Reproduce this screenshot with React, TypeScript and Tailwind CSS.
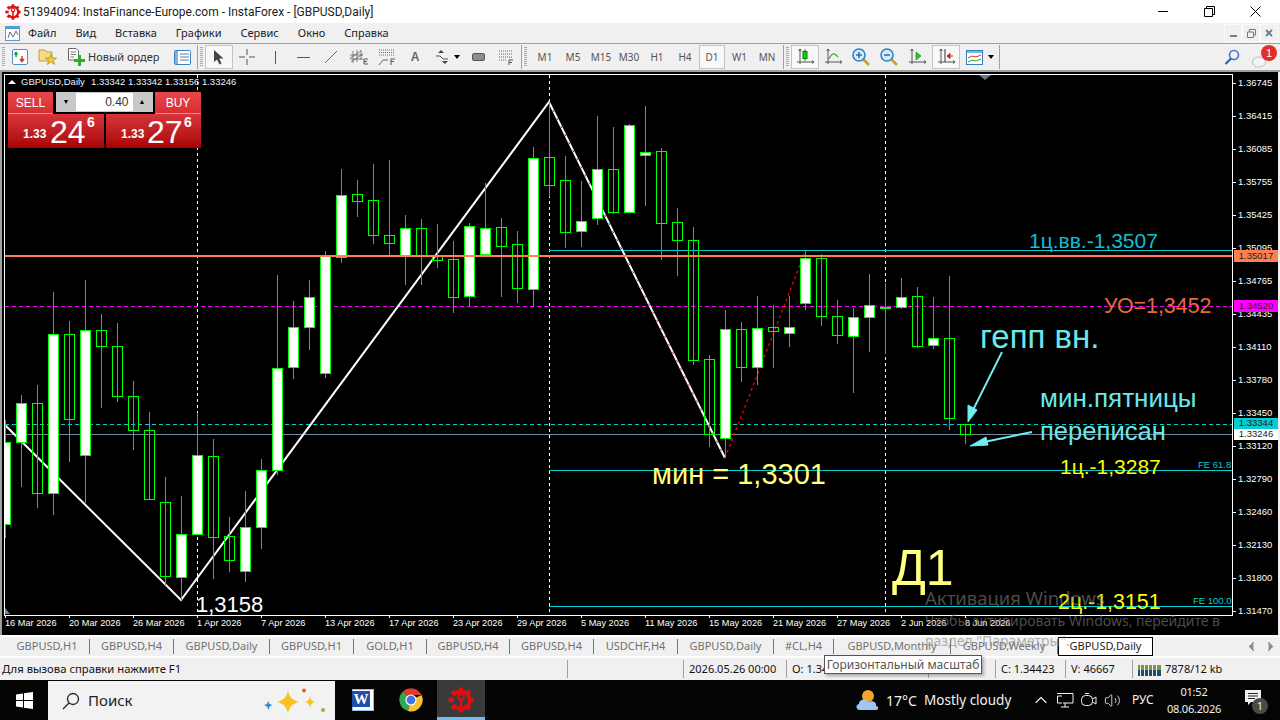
import { ChevronUp, ChevronLeft, ChevronRight, Volume2 } from "lucide-react";

// [wickTop, wickBottom, bodyTop, bodyBottom, filled]
const candles: [number, number, number, number, boolean][] = [
  [420, 538, 442, 524, true], [395, 487, 403, 442, true], [385, 508, 403, 493, false], [292, 515, 334, 493, true],
  [321, 462, 334, 419, false], [280, 503, 330, 455, true], [314, 408, 330, 346, false], [323, 402, 346, 396, false],
  [381, 450, 396, 430, false], [412, 499, 430, 499, false], [477, 585, 502, 576, false], [496, 600, 534, 577, true],
  [413, 534, 455, 534, true], [439, 579, 456, 537, false], [517, 572, 536, 560, false], [491, 582, 527, 571, true],
  [459, 549, 470, 527, true], [275, 475, 368, 470, true], [301, 379, 327, 367, true], [280, 350, 297, 327, true],
  [251, 378, 256, 373, true], [169, 263, 195, 257, true], [180, 217, 194, 201, false], [164, 244, 200, 235, false],
  [160, 256, 235, 243, false], [215, 285, 228, 255, true], [219, 285, 228, 255, false], [224, 268, 256, 260, false],
  [241, 313, 259, 297, false], [223, 306, 226, 296, true], [183, 255, 228, 254, true], [218, 297, 227, 246, false],
  [231, 303, 244, 288, false], [147, 307, 158, 289, true], [102, 197, 157, 185, false], [156, 248, 180, 232, false],
  [181, 247, 221, 231, true], [116, 225, 169, 218, true], [127, 214, 169, 212, false], [124, 213, 125, 212, true],
  [106, 206, 152, 155, true], [148, 260, 151, 223, false], [208, 276, 222, 240, false], [227, 365, 240, 360, false],
  [355, 447, 359, 434, false], [310, 458, 329, 438, true], [322, 382, 329, 367, false], [296, 385, 328, 367, true],
  [305, 368, 327, 331, false], [296, 347, 327, 333, true], [251, 310, 258, 303, true], [254, 326, 258, 316, false],
  [300, 344, 316, 335, false], [308, 393, 317, 336, true], [274, 352, 305, 317, true], [283, 354, 307, 308, true],
  [278, 309, 297, 307, true], [287, 348, 296, 346, false], [297, 349, 338, 345, true], [276, 430, 338, 418, false],
  [424, 444, 424, 434, false],
];

const prices: [string, number][] = [
  ["1.36745", 83], ["1.36415", 116], ["1.36085", 149], ["1.35755", 182], ["1.35425", 215], ["1.35095", 248],
  ["1.34765", 281], ["1.34435", 314], ["1.34110", 347], ["1.33780", 380], ["1.33450", 413], ["1.33120", 446],
  ["1.32790", 479], ["1.32460", 512], ["1.32130", 545], ["1.31800", 578], ["1.31470", 611],
];

const dates = [
  "16 Mar 2026", "20 Mar 2026", "26 Mar 2026", "1 Apr 2026", "7 Apr 2026", "13 Apr 2026", "17 Apr 2026", "23 Apr 2026",
  "29 Apr 2026", "5 May 2026", "11 May 2026", "15 May 2026", "21 May 2026", "27 May 2026", "2 Jun 2026", "8 Jun 2026",
];

const tabs = [
  { name: "GBPUSD,H1", w: "w-[85px]" },
  { name: "GBPUSD,H4", w: "w-[84px]" },
  { name: "GBPUSD,Daily", w: "w-[96px]" },
  { name: "GBPUSD,H1", w: "w-[84px]" },
  { name: "GOLD,H1", w: "w-[73px]" },
  { name: "GBPUSD,H4", w: "w-[83px]" },
  { name: "GBPUSD,H4", w: "w-[84px]" },
  { name: "USDCHF,H4", w: "w-[84px]" },
  { name: "GBPUSD,Daily", w: "w-[96px]" },
  { name: "#CL,H4", w: "w-[60px]" },
  { name: "GBPUSD,Monthly", w: "w-[117px]" },
  { name: "GBPUSD,Weekly", w: "w-[107px]" },
];

const notes = [
  { t: "1ц.вв.-1,3507", c: "left-[1029px] top-[168px] text-[21px] text-[#12bcd6]" },
  { t: "УО=1,3452", c: "left-[1104px] top-[235px] text-[21.4px] text-[#e8683f]" },
  { t: "гепп вн.", c: "left-[980px] top-[264px] text-[33px] text-[#6de6ea]" },
  { t: "мин.пятницы", c: "left-[1040px] top-[326px] text-[26px] text-[#6de6ea]" },
  { t: "переписан", c: "left-[1040px] top-[360px] text-[25.6px] text-[#6de6ea]" },
  { t: "1ц.-1,3287", c: "left-[1060px] top-[394px] text-[21px] text-[#ffff00]" },
  { t: "мин = 1,3301", c: "left-[652px] top-[402px] text-[29px] text-[#ffff80]" },
  { t: "1,3158", c: "left-[196px] top-[533px] text-[22px] text-white" },
  { t: "Д1", c: "left-[892px] top-[496px] text-[50px] text-[#ffff80]" },
  { t: "2ц.-1,3151", c: "left-[1058px] top-[531px] text-[21.4px] text-[#ffff00]" },
  { t: "FE 61.8", c: "left-[1198px] top-[393px] text-[9.5px] text-[#00ced1]" },
  { t: "FE 100.0", c: "left-[1193px] top-[529px] text-[9.5px] text-[#00ced1]" },
];

function Chart() {
  return (
    <svg className="absolute inset-0" width="1280" height="563" viewBox="0 72 1280 563">
      <defs>
        <clipPath id="plot">
          <rect x="5" y="75" width="1227" height="540" />
        </clipPath>
      </defs>
      <rect x="4.5" y="74.5" width="1228" height="540.5" fill="none" stroke="#fff" shapeRendering="crispEdges" />
      <g clipPath="url(#plot)">
        <g shapeRendering="crispEdges">
          <path d="M197.5 75V615M549.5 75V615M885.5 75V615" stroke="#fff" strokeDasharray="3 3" />
          <path d="M5 306.5H1232" stroke="#ff00ff" strokeDasharray="4 3" />
          <path d="M5 424.5H1232" stroke="#00ced1" strokeDasharray="4 3" />
          <path d="M5 434.5H1232" stroke="#778899" />
          <path d="M549 250.5H1232M549 470.5H1232M549 606.5H1232" stroke="#00ced1" />
        </g>
        <path d="M5 425L181 600L549 102L725 458" fill="none" stroke="#fff" strokeWidth="2" />
        <path d="M549 102L725 458" stroke="#e00000" strokeWidth="1" strokeDasharray="2 7" />
        <path d="M725 458L805 252" stroke="#ff0000" strokeWidth="1.2" strokeDasharray="3 3" />
        <g shapeRendering="crispEdges">
          {candles.map(([wt, wb, bt, bb, filled], i) => {
            const x = 5 + 16 * i;
            return (
              <g key={i}>
                <path d={`M${x + 0.5} ${wt}V${wb}`} stroke="#00e000" />
                <rect x={x - 4.5} y={bt + 0.5} width="10" height={bb - bt} fill={filled ? "#fff" : "#000"} fillOpacity={filled ? 1 : 0} stroke="#00ff00" />
              </g>
            );
          })}
          <rect x="5" y="255" width="1227" height="2" fill="#ff7f50" />
        </g>
      </g>
      {prices.map(([, y]) => (
        <path key={y} d={`M1233 ${y + 0.5}H1236`} stroke="#fff" shapeRendering="crispEdges" />
      ))}
      {dates.map((_, i) => (
        <path key={i} d={`M${5.5 + 64 * i} 615V618`} stroke="#fff" shapeRendering="crispEdges" />
      ))}
      <path d="M979 75H991L985 80Z" fill="#6b7b8c" />
      <path d="M5 614V608L10 614Z" fill="#778899" />
      <g fill="#6fedf0" stroke="#6fedf0">
        <path d="M1002 352L971 414" strokeWidth="2" />
        <path d="M968 422L968 405L977 410Z" />
        <path d="M1032 432L984 442" strokeWidth="2" />
        <path d="M970 446L986 437L988 445Z" />
      </g>
    </svg>
  );
}

function TradePanel() {
  return (
    <div className="absolute left-[8px] top-[20px] flex w-[193px] flex-col font-['Liberation_Sans',sans-serif] text-white">
      <div className="flex h-[22px] justify-between">
        <div className="flex w-[45px] items-center justify-center border-b border-[#f08a8a] bg-gradient-to-b from-[#e8474c] to-[#d82d33] text-[12px]">SELL</div>
        <div className="flex h-[20px] w-[97px] bg-[#c8c8c8] p-px text-[12px] text-[#333]">
          <div className="flex w-[19px] items-center justify-center text-[7px] text-black">▼</div>
          <div className="flex flex-1 items-center justify-end bg-white pr-1">0.40</div>
          <div className="flex w-[19px] items-center justify-center text-[7px] text-black">▲</div>
        </div>
        <div className="flex w-[46px] items-center justify-center border-b border-[#f08a8a] bg-gradient-to-b from-[#e8474c] to-[#d82d33] text-[12px]">BUY</div>
      </div>
      <div className="flex h-[34px] justify-between">
        <div className="relative w-[96px] bg-gradient-to-b from-[#d8343a] to-[#a80000]">
          <span className="absolute left-[15px] top-[14px] text-[12px] font-bold leading-none">1.33</span>
          <span className="absolute left-[42px] top-[2px] text-[32px] leading-none">24</span>
          <span className="absolute left-[79px] top-[1px] text-[14px] font-bold leading-none">6</span>
        </div>
        <div className="relative w-[95px] bg-gradient-to-b from-[#d8343a] to-[#a80000]">
          <span className="absolute left-[15px] top-[14px] text-[12px] font-bold leading-none">1.33</span>
          <span className="absolute left-[41px] top-[2px] text-[32px] leading-none">27</span>
          <span className="absolute left-[78px] top-[1px] text-[14px] font-bold leading-none">6</span>
        </div>
      </div>
    </div>
  );
}

function Logo({ size = 18 }: { size?: number }) {
  const teeth = [0, 45, 90, 135, 180, 225, 270, 315];
  return (
    <svg width={size} height={size} viewBox="0 0 24 24">
      <circle cx="12" cy="12" r="8" fill="none" stroke="#e01010" strokeWidth="3.5" strokeDasharray="36 14" strokeDashoffset="-32" />
      {teeth.map((a) => (
        <rect key={a} x="10" y="0.5" width="4" height="5" fill="#e01010" transform={`rotate(${a} 12 12)`} />
      ))}
      <circle cx="12" cy="9" r="2.6" fill="none" stroke="#e01010" strokeWidth="1.8" />
      <rect x="10.8" y="11" width="2.4" height="12" fill="#e01010" />
    </svg>
  );
}

function Axes({ children }: { children?: React.ReactNode }) {
  return (
    <svg width="20" height="20" viewBox="0 0 20 20" fill="none">
      <path d="M5 2V17M2 15H19M3.5 4L5 2L6.5 4M17 13.5L19 15L17 16.5" stroke="#555" />
      {children}
    </svg>
  );
}

function Lens({ minus }: { minus?: boolean }) {
  return (
    <svg width="20" height="20" viewBox="0 0 20 20" fill="none">
      <path d="M12 12L18 18" stroke="#d0a020" strokeWidth="2.6" />
      <circle cx="8" cy="8" r="6" fill="#d6ecfa" stroke="#2f83c8" strokeWidth="1.6" />
      <path d={minus ? "M5 8H11" : "M5 8H11M8 5V11"} stroke="#2f6fb0" strokeWidth="1.6" />
    </svg>
  );
}

function Caret() {
  return <span className="ml-px h-0 w-0 border-x-[3.5px] border-t-[4px] border-x-transparent border-t-black" />;
}

function Grip() {
  return <span className="mx-[2px] h-[20px] w-[3px] bg-[repeating-linear-gradient(#aaa_0_1px,#f0f0f0_1px_2px)]" />;
}

function Sep() {
  return <span className="block h-[24px] w-px bg-[#a0a0a0]" />;
}

function Btn({ active, children }: { active?: boolean; children?: React.ReactNode }) {
  return (
    <div className={`flex h-[24px] w-[28px] items-center justify-center ${active ? "border border-[#c4c4c4] bg-[#f8f8f8]" : ""}`}>
      {children}
    </div>
  );
}

function Toolbar() {
  return (
    <div className="flex h-[26px] items-center bg-[#f0f0f0] text-[12px] text-[#333]">
      <Grip />
      <div className="ml-[1px] flex w-[23px] justify-center">
        <svg width="16" height="16" viewBox="0 0 16 16" fill="none">
          <rect x="0.5" y="0.5" width="15" height="15" rx="1.5" fill="#fff" stroke="#4f8fc8" />
          <path d="M4 8V4M2.5 5.5L4 3.5L5.5 5.5" stroke="#10a030" strokeWidth="1.5" />
          <path d="M10 7V12M8 10L10 12.5L12 10" stroke="#e03020" strokeWidth="1.5" />
        </svg>
      </div>
      <div className="flex w-[32px] justify-center">
        <svg width="19" height="18" viewBox="0 0 19 18">
          <path d="M1 2H7L8.5 4H14V13H1Z" fill="#f4dc88" stroke="#bda048" />
          <path d="M13 6L14.6 10H18.5L15.4 12.4L16.6 16.5L13 14L9.4 16.5L10.6 12.4L7.5 10H11.4Z" fill="#f0c840" stroke="#b08a20" strokeWidth="0.7" />
        </svg>
      </div>
      <div className="flex w-[25px] justify-center">
        <svg width="18" height="18" viewBox="0 0 18 18">
          <path d="M1.5 0.5H9L11.5 3V12H1.5Z" fill="#fff" stroke="#666" />
          <path d="M3.5 4H9M3.5 6.5H9M3.5 9H7" stroke="#777" />
          <path d="M11 7V11H7V14H11V18H14V14H18V11H14V7Z" fill="#28b030" />
        </svg>
      </div>
      <span className="w-[76px] whitespace-nowrap font-['Noto_Sans',sans-serif] text-[11px]">Новый ордер</span>
      <div className="ml-[10px] flex w-[17px] justify-center">
        <svg width="17" height="15" viewBox="0 0 17 15" fill="none">
          <rect x="0.5" y="0.5" width="16" height="14" rx="1" fill="#fff" stroke="#3a7fc0" />
          <rect x="1" y="1" width="3" height="13" fill="#7fb4e0" />
          <path d="M6 4H15M6 7H15M6 10H15" stroke="#5a7ea0" />
        </svg>
      </div>
      <span className="ml-[6px]"><Sep /></span>
      <Grip />
      <Btn active>
        <svg width="12" height="16" viewBox="0 0 12 16"><path d="M1 1V13L4 10.5L6.5 15.5L8.5 14.5L6.2 9.5H10.5Z" fill="#444" /></svg>
      </Btn>
      <Btn>
        <svg width="16" height="16" viewBox="0 0 16 16" fill="none"><path d="M0 8H6M10 8H16M8 0V6M8 10V16" stroke="#555" /></svg>
      </Btn>
      <Btn><span className="h-[13px] w-px bg-[#555]" /></Btn>
      <Btn><span className="h-px w-[13px] bg-[#555]" /></Btn>
      <Btn>
        <svg width="14" height="14" viewBox="0 0 14 14" fill="none"><path d="M1 13L13 1" stroke="#666" /></svg>
      </Btn>
      <Btn>
        <svg width="20" height="18" viewBox="0 0 20 18" fill="none">
          <path d="M1 10L12 3M2 14L14 6M1 7H14M1 11H14M4 3V15M8 2V14M12 2V12" stroke="#666" strokeWidth="0.8" />
          <path d="M15 11H19M15 13.5H18M15 16H19M15 11V16" stroke="#555" />
        </svg>
      </Btn>
      <Btn>
        <svg width="18" height="18" viewBox="0 0 18 18" fill="none">
          <path d="M1 2H17M1 4.5H17M1 7H17" stroke="#666" strokeDasharray="1 1" />
          <path d="M1 17L5 12H10" stroke="#666" />
          <path d="M13 11H17M13 13.5H16M13 11V17" stroke="#555" />
        </svg>
      </Btn>
      <Btn><span className="font-['Liberation_Sans',sans-serif] text-[12px] font-bold text-[#666]">A</span></Btn>
      <Btn>
        <svg width="16" height="16" viewBox="0 0 16 16">
          <path d="M3 4L6 1L9 4Z" fill="#444" />
          <path d="M7 12L10 15L13 12Z" fill="#444" />
          <path d="M1 7L5 7L8 10L13 10" stroke="#555" fill="none" />
        </svg>
      </Btn>
      <span className="-ml-[6px] flex w-[10px] justify-center"><Caret /></span>
      <span className="ml-[3px] flex w-[28px] justify-center">
        <span className="h-[8px] w-[13px] rounded-[2px] border border-[#555] bg-[#8e8e8e]" />
      </span>
      <Btn>
        <svg width="14" height="15" viewBox="0 0 14 15" fill="none">
          <path d="M0 1H14M0 4H14M0 7H14M0 10H7" stroke="#666" strokeDasharray="1 1" />
          <path d="M10 10H14M10 12.5H13M10 10V15" stroke="#555" />
        </svg>
      </Btn>
      <span className="ml-[1px]"><Sep /></span>
      <Grip />
      <div className="ml-[2px] flex items-center text-[10px] text-[#555]">
        {["M1", "M5", "M15", "M30", "H1", "H4"].map((p) => (
          <span key={p} className="flex h-[24px] w-[28px] items-center justify-center">{p}</span>
        ))}
        <span className="flex h-[24px] w-[26px] items-center justify-center border border-[#c4c4c4] bg-[#f8f8f8]">D1</span>
        <span className="flex h-[24px] w-[29px] items-center justify-center">W1</span>
        <span className="flex h-[24px] w-[26px] items-center justify-center">MN</span>
      </div>
      <span className="ml-[3px]"><Sep /></span>
      <Grip />
      <Btn active>
        <Axes><path d="M10 2V14" stroke="#00a000" /><rect x="8" y="4.5" width="4" height="7" fill="#10d010" stroke="#008000" /></Axes>
      </Btn>
      <Btn>
        <Axes><path d="M6 12C9 5 12 6 15 10" stroke="#40a040" strokeWidth="1.2" /></Axes>
      </Btn>
      <Btn><Lens /></Btn>
      <Btn><Lens minus /></Btn>
      <Btn>
        <Axes><path d="M9 5L14 9L9 13Z" fill="#30c030" stroke="#108010" strokeWidth="0.6" /></Axes>
      </Btn>
      <span className="ml-[1px]">
        <Btn active>
          <Axes><path d="M9 2V15" stroke="#333" /><path d="M17 9H12M14 6.5L11 9L14 11.5Z" fill="#c03010" stroke="#c03010" /></Axes>
        </Btn>
      </span>
      <Btn>
        <svg width="17" height="15" viewBox="0 0 17 15" fill="none">
          <rect x="0.5" y="0.5" width="16" height="14" fill="#fff" stroke="#3a7fc0" />
          <rect x="1" y="1" width="15" height="2" fill="#7fb4e0" />
          <path d="M2 8L6 6L10 7L15 5" stroke="#c04020" />
          <path d="M2 12L6 10L10 11L15 9" stroke="#30a030" />
        </svg>
      </Btn>
      <span className="-ml-[3px] flex w-[10px] justify-center"><Caret /></span>
      <span className="ml-[4px]"><Sep /></span>
      <div className="ml-auto flex items-center">
        <svg width="16" height="16" viewBox="0 0 16 16" fill="none">
          <circle cx="10" cy="6" r="4.5" stroke="#3f78c8" strokeWidth="1.6" />
          <path d="M7 9.5L1.5 15" stroke="#2a5fb8" strokeWidth="2.2" />
        </svg>
        <div className="relative ml-[12px] mr-[3px] h-[24px] w-[25px]">
          <svg className="absolute bottom-0 left-0" width="14" height="14" viewBox="0 0 14 14"><ellipse cx="7" cy="7" rx="6.5" ry="5" fill="#f4f4f4" stroke="#bbb" /><path d="M4 11L3 14L7 12Z" fill="#ddd" /></svg>
          <span className="absolute right-0 top-0 flex h-[16px] w-[16px] items-center justify-center rounded-full bg-[#e0302a] font-['Liberation_Sans',sans-serif] text-[11px] text-white">1</span>
        </div>
      </div>
    </div>
  );
}

function MdiBtn({ children }: { children?: React.ReactNode }) {
  return <div className="flex h-[18px] w-[18px] items-center justify-center border border-[#fafafa]">{children}</div>;
}

function Sparkles() {
  return (
    <svg className="absolute left-[216px] top-[7px]" width="64" height="30" viewBox="0 0 64 30">
      <path d="M24 2C25 9 28 12 35 14C28 16 25 19 24 26C23 19 20 16 13 14C20 12 23 9 24 2Z" fill="#f8c220" />
      <path d="M46 8C46.5 11.5 48 13 51 14C48 15 46.5 16.5 46 20C45.5 16.5 44 15 41 14C44 13 45.5 11.5 46 8Z" fill="#f8c220" />
      <path d="M4 13L5.5 16L8.5 17L5.5 18.5L4.5 22L3 18.5L0 17L3 16Z" fill="#2090e0" />
      <circle cx="40" cy="2.5" r="2" fill="#f05a28" />
      <circle cx="59" cy="22" r="2" fill="#80c040" />
    </svg>
  );
}

function Taskbar() {
  return (
    <div className="flex h-[40px] items-stretch bg-[#050505] font-['Noto_Sans',sans-serif] text-[#f2f2f2]">
      <div className="flex w-[48px] items-center justify-center">
        <svg width="17" height="17" viewBox="0 0 17 17" fill="#fff">
          <path d="M0 2.4L7 1.4V8H0ZM8 1.2L17 0V8H8ZM0 9H7V15.6L0 14.6ZM8 9H17V17L8 15.8Z" />
        </svg>
      </div>
      <div className="relative mt-px flex w-[287px] items-center bg-[#f2f2f2] pl-[14px] text-[15px] text-[#222]">
        <svg width="18" height="18" viewBox="0 0 18 18" fill="none" stroke="#222" strokeWidth="1.3">
          <circle cx="11" cy="7" r="5.5" />
          <path d="M7 11L1 17" />
        </svg>
        <span className="ml-[8px]">Поиск</span>
        <Sparkles />
      </div>
      <div className="flex w-[56px] items-center justify-center">
        <div className="relative h-[22px] w-[22px] border border-[#9ab8e0] bg-white">
          <span className="absolute -left-[1px] top-[1px] flex h-[16px] w-[18px] items-center justify-center bg-[#1f4fa8] font-['Liberation_Serif',serif] text-[15px] font-bold text-white">W</span>
        </div>
      </div>
      <div className="flex w-[40px] items-center justify-center">
        <svg width="24" height="24" viewBox="0 0 24 24">
          <path d="M12 12L4 3.5A11.5 11.5 0 0 1 22.5 7H12Z" fill="#e33b2e" />
          <path d="M12 12L4 3.5A11.5 11.5 0 0 0 9 23L12 12Z" fill="#2fa84f" />
          <path d="M12 12L22.5 7A11.5 11.5 0 0 1 9 23L12 12Z" fill="#fbc02d" />
          <circle cx="12" cy="12" r="5.6" fill="#fff" />
          <circle cx="12" cy="12" r="4.4" fill="#3b78e7" />
        </svg>
      </div>
      <div className="ml-[6px] flex w-[48px] items-center justify-center border-b-[3px] border-[#76b9ed] bg-[#3a3a3a] pt-[3px]">
        <Logo size={26} />
      </div>
      <div className="ml-[370px] flex w-[31px] items-center">
        <svg width="26" height="24" viewBox="0 0 26 24">
          <circle cx="13" cy="8" r="6" fill="#f4a62a" />
          <path d="M5 22C1 22 0 17 4 16C4 11 11 10 13 14C17 12 22 14 21 18C24 18 24 22 21 22Z" fill="#9fc6ee" />
        </svg>
      </div>
      <span className="flex w-[38px] items-center text-[14px]">17°C</span>
      <span className="flex w-[105px] items-center whitespace-nowrap text-[13.5px]">Mostly cloudy</span>
      <div className="flex w-[24px] items-center justify-center"><ChevronUp size={20} strokeWidth={1.3} /></div>
      <div className="flex w-[24px] items-center justify-center">
        <svg width="18" height="16" viewBox="0 0 18 16" fill="none" stroke="#f2f2f2">
          <path d="M1 1.5H17V11H7M6 4H1.5V11H6M9 11V15M5 15H13" />
        </svg>
      </div>
      <div className="flex w-[24px] items-center justify-center">
        <svg width="16" height="16" viewBox="0 0 16 16" fill="none" stroke="#f2f2f2">
          <rect x="0.5" y="3.5" width="11" height="10" rx="4" />
          <path d="M11.5 7L15 5V12L11.5 10M4 1.5H8" />
        </svg>
      </div>
      <div className="flex w-[22px] items-center justify-center"><Volume2 size={17} strokeWidth={1.2} /></div>
      <span className="ml-[9px] flex w-[36px] items-center text-[12px]">РУС</span>
      <div className="-ml-[3px] flex w-[58px] flex-col items-center justify-center text-[11px] leading-[17px] tracking-[-0.2px]">
        <span>01:52</span>
        <span>08.06.2026</span>
      </div>
      <div className="relative ml-[22px] flex w-[16px] items-center">
        <svg className="-mt-[6px]" width="16" height="15" viewBox="0 0 16 15" fill="#f2f2f2">
          <path d="M0 0H16V12H6L3 15V12H0Z" />
          <path d="M3 3.5H13M3 6H13M3 8.5H10" stroke="#222" />
        </svg>
        <span className="absolute left-[7px] top-[18px] flex h-[16px] w-[16px] items-center justify-center rounded-full bg-[#4a4a4a] text-[11px]">1</span>
      </div>
    </div>
  );
}

export default function App() {
  return (
    <div className="relative flex h-[720px] w-[1280px] flex-col overflow-hidden bg-[#f0f0f0] font-['Noto_Sans',sans-serif]">
      <div className="flex h-[23px] items-center bg-white">
        <div className="ml-[2px] flex w-[21px] justify-center"><Logo size={16} /></div>
        <span className="font-['Roboto',sans-serif] text-[12px] text-[#222]">51394094: InstaFinance-Europe.com - InstaForex - [GBPUSD,Daily]</span>
        <div className="ml-auto mr-[2px] flex items-center">
          <div className="flex w-[46px] justify-center"><span className="h-px w-[10px] bg-black" /></div>
          <div className="flex w-[46px] justify-center">
            <svg width="11" height="11" viewBox="0 0 11 11" fill="none" stroke="#000"><path d="M0.5 2.5H8.5V10.5H0.5ZM2.5 2.5V0.5H10.5V8.5H8.5" /></svg>
          </div>
          <div className="flex w-[46px] justify-center">
            <svg width="11" height="11" viewBox="0 0 11 11" stroke="#000"><path d="M0.5 0.5L10.5 10.5M10.5 0.5L0.5 10.5" /></svg>
          </div>
        </div>
      </div>
      <div className="flex h-[21px] items-center border-b border-[#a0a0a0] text-[11px] text-[#222]">
        <div className="ml-[5px] flex w-[23px]">
          <svg width="15" height="15" viewBox="0 0 15 15" fill="none">
            <rect x="0.5" y="0.5" width="14" height="14" fill="#fff" stroke="#5a9bd5" />
            <rect x="1" y="1" width="13" height="2" fill="#5a9bd5" />
            <path d="M3 12L5 6L8 11L11 5L13 9" stroke="#667" />
          </svg>
        </div>
        <div className="flex gap-[19px]">
          <span>Файл</span><span>Вид</span><span>Вставка</span><span>Графики</span><span>Сервис</span><span>Окно</span><span>Справка</span>
        </div>
        <div className="ml-auto mr-[2px] flex">
          <MdiBtn><span className="mt-[6px] h-[2px] w-[7px] bg-[#6b7b8c]" /></MdiBtn>
          <MdiBtn>
            <svg width="9" height="9" viewBox="0 0 9 9" fill="none" stroke="#6b7b8c"><path d="M0.5 3H6.5V8.5H0.5ZM2.5 3V0.5H8.5V6H6.5" /></svg>
          </MdiBtn>
          <MdiBtn>
            <svg width="8" height="8" viewBox="0 0 8 8" stroke="#6b7b8c" strokeWidth="1.8"><path d="M1 1L7 7M7 1L1 7" /></svg>
          </MdiBtn>
        </div>
      </div>
      <Toolbar />
      <div className="h-[2px] bg-[#a0a0a0]" />
      <div className="relative h-[563px] bg-black font-['Liberation_Sans',sans-serif]">
        <span className="absolute left-0 top-0 h-full w-[2px] bg-[#a0a0a0]" />
        <span className="absolute right-0 top-0 h-full w-[2px] bg-[#f0f0f0]" />
        <Chart />
        <div className="absolute left-[8px] top-[4px] flex items-center gap-[4px] text-[9.5px] leading-[12px] text-[#e8f4ff]">
          <span className="h-0 w-0 border-x-[4px] border-b-[4px] border-x-transparent border-b-white" />
          <span className="ml-px w-[66px]">GBPUSD,Daily</span>
          <span>1.33342 1.33342 1.33156 1.33246</span>
        </div>
        <TradePanel />
        {prices.map(([p, y]) => (
          <span key={p} className="absolute left-[1238px] -translate-y-1/2 text-[9.5px] leading-none text-white" style={{ top: y - 72 }}>{p}</span>
        ))}
        <span className="absolute left-[1234px] top-[178px] flex h-[12px] w-[44px] items-center justify-center bg-[#ff7f50] text-[9.5px] text-[#222]">1.35017</span>
        <span className="absolute left-[1234px] top-[228px] flex h-[12px] w-[44px] items-center justify-center bg-[#ff00ff] text-[9.5px] text-[#222]">1.34520</span>
        <span className="absolute left-[1234px] top-[346px] flex h-[11px] w-[44px] items-center justify-center bg-[#00ced1] text-[9.5px] text-[#222]">1.33344</span>
        <span className="absolute left-[1234px] top-[357px] flex h-[11px] w-[44px] items-center justify-center bg-white text-[9.5px] text-[#222]">1.33246</span>
        {dates.map((d, i) => (
          <span key={d} className="absolute top-[546px] whitespace-nowrap text-[9.2px] leading-[11px] text-white" style={{ left: 5 + 64 * i }}>{d}</span>
        ))}
        {notes.map((n) => (
          <span key={n.t} className={`absolute -translate-y-1/2 whitespace-nowrap leading-none ${n.c}`}>{n.t}</span>
        ))}
      </div>
      <div className="h-[2px] bg-white" />
      <div className="flex h-[19px] items-center bg-[#f0f0f0] pl-[5px] text-[11px] text-[#707070]">
        {tabs.map((t, i) => (
          <span key={i} className={`flex h-[15px] items-center justify-center border-r border-[#777] ${t.w}`}>{t.name}</span>
        ))}
        <span className="flex h-[19px] w-[95px] items-center justify-center border border-black bg-white text-[#222]">GBPUSD,Daily</span>
        <div className="ml-auto mr-[2px] flex gap-[4px] text-[#8a8a8a]">
          <ChevronLeft size={15} fill="#8a8a8a" />
          <ChevronRight size={15} fill="#8a8a8a" />
        </div>
      </div>
      <div className="h-[2px] bg-white" />
      <div className="relative flex h-[22px] items-center text-[11px] text-[#111]">
        <span className="ml-[2px] w-[565px] text-[11.3px]">Для вызова справки нажмите F1</span>
        <span className="h-[18px] w-px bg-[#a0a0a0]" />
        <span className="ml-[115px] h-[18px] w-px bg-[#a0a0a0]" />
        <span className="ml-[5px] w-[97px]">2026.05.26 00:00</span>
        <span className="h-[18px] w-px bg-[#a0a0a0]" />
        <span className="ml-[5px] w-[136px]">O: 1.34</span>
        <span className="h-[18px] w-px bg-[#a0a0a0]" />
        <span className="ml-[66px] h-[18px] w-px bg-[#a0a0a0]" />
        <span className="ml-[5px] w-[64px]">C: 1.34423</span>
        <span className="h-[18px] w-px bg-[#a0a0a0]" />
        <span className="ml-[5px] w-[61px]">V: 46667</span>
        <span className="h-[18px] w-px bg-[#a0a0a0]" />
        <svg className="ml-[5px]" width="23" height="14" viewBox="0 0 23 14">
          <path d="M0 3H23V8H0Z" fill="#6b8e23" opacity="0.9" />
          <path d="M0 8H23V14H0Z" fill="#1f4f6b" />
          <path d="M2.5 0V14M6.5 0V14M10.5 0V14M14.5 0V14M18.5 0V14" stroke="#f0f0f0" />
          <path d="M0 3L23 0V-1H0Z" fill="#f0f0f0" />
        </svg>
        <span className="ml-[4px]">7878/12 kb</span>
        <span className="absolute left-[824px] -top-[3px] flex h-[19px] w-[158px] items-center justify-center border border-[#555] bg-white text-[12px] text-[#555] shadow-[2px_2px_3px_rgba(0,0,0,0.3)]">Горизонтальный масштаб</span>
      </div>
      <Taskbar />
      <div className="pointer-events-none absolute left-[925px] top-[587px] text-[#80808099]">
        <div className="text-[18.5px] leading-[21px]">Активация Windows</div>
        <div className="mt-[2px] whitespace-nowrap text-[14px] leading-[21px]">Чтобы активировать Windows, перейдите в</div>
        <div className="whitespace-nowrap text-[14px] leading-[19px]">раздел "Параметры".</div>
      </div>
    </div>
  );
}
